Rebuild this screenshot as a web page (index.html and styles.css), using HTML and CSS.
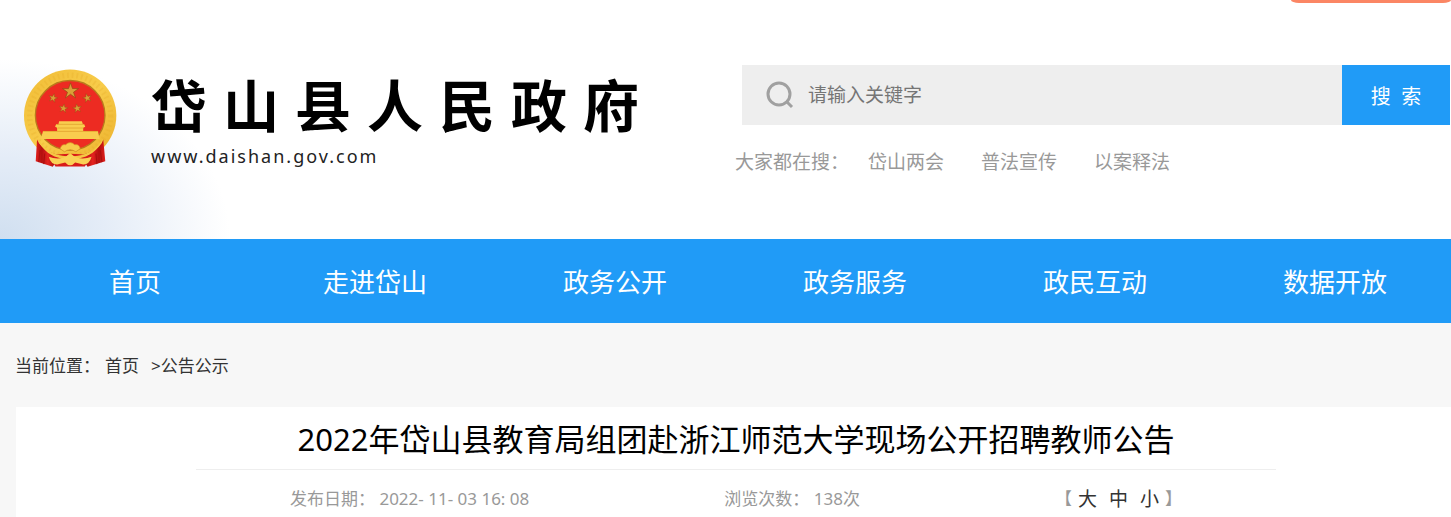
FILE: index.html
```
<!DOCTYPE html>
<html lang="zh-CN">
  <head>
    <meta charset="UTF-8" />
    <meta name="viewport" content="width=device-width, initial-scale=1.0" />
    <title>岱山县人民政府</title>
    <link rel="stylesheet" href="styles.css">
  </head>
  <body>
    <header class="header">
      <div class="top-tab"></div>
      <a href="#" class="logo">
        <svg class="emblem" viewBox="28 26 278 292" aria-hidden="true">
          <defs>
            <linearGradient id="gold" x1="0" y1="0" x2="1" y2="1">
              <stop offset="0" stop-color="#f0bc36" />
              <stop offset="0.5" stop-color="#f8cc4a" />
              <stop offset="1" stop-color="#ebb02c" />
            </linearGradient>
            <linearGradient id="cloth" x1="0" y1="0" x2="1" y2="0">
              <stop offset="0" stop-color="#e3211d" />
              <stop offset="0.25" stop-color="#b3100f" />
              <stop offset="0.5" stop-color="#e5231f" />
              <stop offset="0.75" stop-color="#b3100f" />
              <stop offset="1" stop-color="#df1f1c" />
            </linearGradient>
            <path id="star" d="M0-24 6-7 24-7 9 4 15 21 0 10-15 21-9 4-24-7-6-7z" />
          </defs>
          <circle cx="166" cy="165" r="138" fill="url(#gold)" />
          <circle cx="166" cy="165" r="121" fill="none" stroke="#e3a624" stroke-width="16" stroke-dasharray="5 9" opacity="0.25" />
          <circle cx="166" cy="164" r="104" fill="#ed2b22" stroke="#b97a1c" stroke-width="4" />
          <g fill="#d9a038" stroke="#8f4a12" stroke-width="2">
            <use href="#star" transform="translate(167 91)" />
            <use href="#star" transform="translate(115 112) scale(.55) rotate(15)" />
            <use href="#star" transform="translate(217 112) scale(.55) rotate(-15)" />
            <use href="#star" transform="translate(146 143) scale(.55) rotate(10)" />
            <use href="#star" transform="translate(187 143) scale(.55) rotate(-10)" />
          </g>
          <!-- Gate tower -->
          <path d="M133 182h68l3 9h4l3 7-6 3v10h44l5 24H78l7-24h42v-10l-6-3 3-7h7z" fill="#f9cd4e" />
          <path d="M126 191h80M129 202h76M84 212h166" stroke="#dc9a28" stroke-width="2" />
          <!-- Curtains -->
          <path d="M67 236c12 29 44 41 69 48l-22 34-51-17z" fill="url(#cloth)" />
          <path d="M265 236c-12 29-44 41-69 48l22 34 53-17z" fill="url(#cloth)" />
          <path d="M104 286q62-14 124 0l-18 31h-88z" fill="#d81c19" />
          <path d="M70 234c22 38 53 50 85 52l11-10 11 10c32-2 64-14 87-52l-3 12c-24 34-51 46-79 48l-16-10-16 10c-28-2-55-14-77-48z" fill="#f5c744" />
          <path d="M136 264c2-9 9-14 16-12q14-13 28 0c8-2 15 3 16 12l-13 9q-17-12-34 0z" fill="#f7cb4a" stroke="#cf8a20" stroke-width="2" />
          <path d="M102 288q21 8 43 3l21-11 21 11q22 5 43-3-6 23-25 23l-24-6q-15 17-30 0l-24 6q-19 0-25-23z" fill="#fad156" />
          <path d="M76 268l-4 36M90 278l-3 32M256 268l5 36M243 278l3 32" fill="none" stroke="#a90f0e" stroke-width="3" />
        </svg>
        <span class="logo-text">
          <span class="logo-name"><b>岱</b><b>山</b><b>县</b><b>人</b><b>民</b><b>政</b><b>府</b></span>
          <span class="logo-url">www.daishan.gov.com</span>
        </span>
      </a>

      <div class="search">
        <form class="search-form">
          <label class="search-box" for="keyword">
            <svg viewBox="0 0 28 28" aria-label="搜索">
              <circle cx="13" cy="13" r="11" />
              <path d="M20 20l6 6" />
            </svg>
            <input type="text" id="keyword" placeholder="请输入关键字" />
          </label>
          <button type="submit">搜&nbsp; 索</button>
        </form>
        <div class="hot">
          <span>大家都在搜：</span>
          <a href="#">岱山两会</a>
          <a href="#">普法宣传</a>
          <a href="#">以案释法</a>
        </div>
      </div>
    </header>

    <nav class="nav">
      <a href="#">首页</a>
      <a href="#">走进岱山</a>
      <a href="#">政务公开</a>
      <a href="#">政务服务</a>
      <a href="#">政民互动</a>
      <a href="#">数据开放</a>
    </nav>

    <div class="breadcrumb">
      <span>当前位置：</span>
      <a href="#">首页</a>
      <span>&gt;<a href="#">公告公示</a></span>
    </div>

    <main class="article">
      <h1>2022年岱山县教育局组团赴浙江师范大学现场公开招聘教师公告</h1>
      <div class="meta">
        <span>发布日期： 2022- 11- 03 16: 08</span>
        <span>浏览次数： 138次</span>
        <span class="font-size">【<button type="button">大</button><button type="button">中</button><button type="button">小</button>】</span>
      </div>
    </main>
  </body>
</html>
```
FILE: styles.css
```
* {
  margin: 0;
  padding: 0;
  box-sizing: border-box;
}

body {
  font-family: "Noto Sans", "Noto Sans CJK SC", sans-serif;
  background-color: #f7f7f7;
  color: #333;
  overflow-x: hidden;
}

a {
  color: inherit;
  text-decoration: none;
}

button,
input {
  font: inherit;
  border: none;
  background: none;
}

button {
  cursor: pointer;
}

.header {
  position: relative;
  display: flex;
  justify-content: space-between;
  align-items: flex-start;
  padding: 65px 1px 62px 24px;
  background: radial-gradient(ellipse 230px 180px at 0 100%, #d0dff0, #e4ecf7 45%, rgba(255, 255, 255, 0)) #fff;
}

.top-tab {
  position: absolute;
  top: 0;
  right: 0;
  width: 160px;
  height: 3px;
  border-radius: 0 0 8px 8px / 0 0 3px 3px;
  background-color: #fb8664;
}

.logo {
  display: flex;
  gap: 34px;
  padding-top: 4px;
}

.emblem {
  width: 93px;
  height: 98px;
}

.logo-text {
  display: flex;
  flex-direction: column;
  color: #000;
}

.logo-name {
  display: flex;
  gap: 16px;
  font-size: 56px;
  line-height: 72px;
}

.logo-name b {
  font-weight: 700;
}

.logo-url {
  font-size: 18px;
  line-height: 30px;
  letter-spacing: 2px;
  color: #222;
}

.search {
  width: 715px;
}

.search-form {
  display: flex;
  height: 60px;
  margin-left: 7px;
  font-size: 19px;
}

.search-box {
  flex: 1;
  display: flex;
  align-items: center;
  gap: 14px;
  padding-left: 24px;
  background-color: #eee;
}

.search-box svg {
  width: 28px;
  height: 28px;
  fill: none;
  stroke: #a0a0a0;
  stroke-width: 3;
}

.search-box input {
  flex: 1;
  height: 60px;
  outline: none;
}

.search-box input::placeholder {
  color: #757575;
}

.search-form button {
  width: 108px;
  background-color: #209bf7;
  color: #fff;
  font-size: 20px;
}

.hot {
  display: flex;
  gap: 37px;
  margin-top: 22px;
  font-size: 19px;
  line-height: 30px;
  color: #999;
}

.hot span {
  margin-right: -18px;
}

.nav {
  display: grid;
  grid-template-columns: repeat(6, minmax(240px, 1fr));
  padding-left: 15px;
  overflow: hidden;
  background-color: #209bf7;
}

.nav a {
  padding-top: 2px;
  color: #fff;
  font-size: 26px;
  line-height: 82px;
  text-align: center;
}

.breadcrumb {
  display: flex;
  gap: 12px;
  padding: 30px 15px 28px;
  font-size: 17px;
  line-height: 26px;
}

.breadcrumb span:first-child {
  margin-right: -7px;
}

.article {
  margin-left: 16px;
  padding: 0 175px 0 180px;
  background-color: #fff;
}

.article h1 {
  padding: 8px 0 6px;
  border-bottom: 1px solid #eee;
  color: #000;
  font-size: 31px;
  font-weight: 400;
  line-height: 48px;
  text-align: center;
}

.meta {
  display: flex;
  justify-content: space-between;
  padding: 14px 94px;
  color: #999;
  font-size: 17px;
  line-height: 30px;
}

.font-size {
  display: flex;
}

.font-size button {
  padding: 0 6px;
  color: #333;
  font-size: 19px;
}
```
